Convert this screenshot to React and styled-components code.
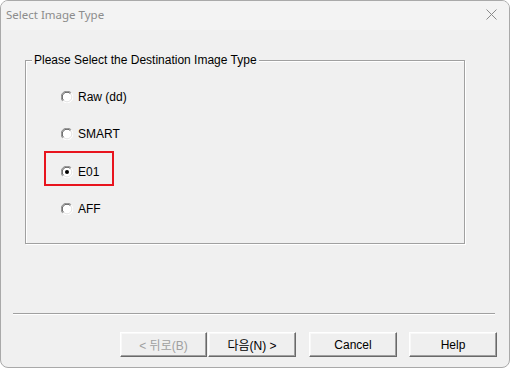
import React from "react";
import styled, { createGlobalStyle } from "styled-components";

const Global = createGlobalStyle`
  html, body { margin: 0; padding: 0; background: #ffffff; }
  * { box-sizing: border-box; }
`;

const FONT = `"Liberation Sans", "Noto Sans CJK KR", Arial, sans-serif`;

const Window = styled.div`
  width: 510px;
  height: 368px;
  border: 1px solid #a9a9a9;
  border-radius: 8px;
  background: #f0f0f0;
  display: flex;
  flex-direction: column;
  font-family: ${FONT};
  font-size: 12px;
  color: #000;
  overflow: hidden;
`;

const TitleBar = styled.div`
  height: 29px;
  display: flex;
  align-items: center;
  justify-content: space-between;
  padding: 0 12px 3px 5px;
  background: #f3f3f3;
`;

const Title = styled.span`
  font-family: "Noto Sans", "Segoe UI", sans-serif;
  font-size: 11.5px;
  color: #8c8c8c;
`;

const Body = styled.div`
  flex: 1;
  display: flex;
  flex-direction: column;
  padding: 30px 12px 0 12px;
`;

const GroupBox = styled.div`
  position: relative;
  margin-left: 12px;
  width: 440px;
  height: 184px;
  border: 1px solid #a0a0a0;
  box-shadow: 1px 1px 0 #ffffff, inset 1px 1px 0 #ffffff;
  padding: 17px 0 0 35px;
  display: flex;
  flex-direction: column;
`;

const Legend = styled.span`
  position: absolute;
  top: -8px;
  left: 6px;
  padding: 0 2px;
  background: #f0f0f0;
  line-height: 14px;
  white-space: nowrap;
`;

const RadioRow = styled.label`
  height: 37.5px;
  display: flex;
  align-items: center;
  gap: 5px;
`;

const RadioLabel = styled.span`
  line-height: 14px;
`;

const Highlight = styled.div`
  position: absolute;
  left: 18px;
  top: 90px;
  width: 70px;
  height: 35px;
  border: 2px solid #e8141e;
  pointer-events: none;
`;

const Separator = styled.div`
  margin-top: 69px;
  height: 2px;
  border-top: 1px solid #a0a0a0;
  border-bottom: 1px solid #ffffff;
  width: 482px;
`;

const ButtonRow = styled.div`
  margin-top: 17px;
  display: flex;
  justify-content: flex-end;
`;

const ButtonGroup = styled.div`
  display: flex;
  gap: ${(p) => p.$gap}px;
  margin-left: ${(p) => p.$ml || 0}px;
`;

const Button = styled.button`
  width: ${(p) => p.$w}px;
  height: 25px;
  padding: 0;
  font-family: ${FONT};
  font-size: 12px;
  color: ${(p) => (p.disabled ? "#a0a0a0" : "#000")};
  background: #efefef;
  border-style: solid;
  border-width: 1px;
  border-color: #ffffff #696969 #696969 #ffffff;
  box-shadow: inset -1px -1px 0 #a0a0a0, inset 1px 1px 0 #f8f8f8;
  display: flex;
  align-items: center;
  justify-content: center;
  cursor: default;
`;

const Radio = ({ checked }) => (
  <svg width="12" height="12" viewBox="0 0 12 12">
    <circle cx="6" cy="6" r="5.5" fill="#ffffff" />
    <path d="M1.8 10.2 A5.5 5.5 0 0 1 10.2 1.8" fill="none" stroke="#8a8a8a" strokeWidth="1" />
    <path d="M2.6 9.4 A4.5 4.5 0 0 1 9.4 2.6" fill="none" stroke="#505050" strokeWidth="1" />
    <path d="M10.2 1.8 A5.5 5.5 0 0 1 1.8 10.2" fill="none" stroke="#ffffff" strokeWidth="1" />
    <path d="M9.4 2.6 A4.5 4.5 0 0 1 2.6 9.4" fill="none" stroke="#e3e3e3" strokeWidth="1" />
    {checked && <circle cx="6" cy="6" r="2" fill="#000" />}
  </svg>
);

const CloseIcon = () => (
  <svg width="11" height="11" viewBox="0 0 11 11">
    <path d="M0.5 0.5 L10.5 10.5 M10.5 0.5 L0.5 10.5" stroke="#8a8a8a" strokeWidth="1" />
  </svg>
);

const options = [
  { label: "Raw (dd)", checked: false },
  { label: "SMART", checked: false },
  { label: "E01", checked: true },
  { label: "AFF", checked: false },
];

export default function App() {
  return (
    <>
      <Global />
      <Window>
        <TitleBar>
          <Title>Select Image Type</Title>
          <CloseIcon />
        </TitleBar>
        <Body>
          <GroupBox>
            <Legend>Please Select the Destination Image Type</Legend>
            {options.map((o) => (
              <RadioRow key={o.label}>
                <Radio checked={o.checked} />
                <RadioLabel>{o.label}</RadioLabel>
              </RadioRow>
            ))}
            <Highlight />
          </GroupBox>
          <Separator />
          <ButtonRow>
            <ButtonGroup $gap={1}>
              <Button $w={87} disabled>&lt; 뒤로(B)</Button>
              <Button $w={88}>다음(N) &gt;</Button>
            </ButtonGroup>
            <ButtonGroup $gap={12} $ml={13}>
              <Button $w={88}>Cancel</Button>
              <Button $w={88}>Help</Button>
            </ButtonGroup>
          </ButtonRow>
        </Body>
      </Window>
    </>
  );
}
